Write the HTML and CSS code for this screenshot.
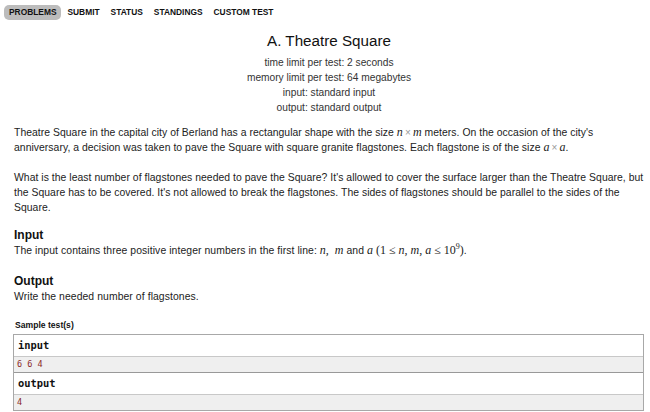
FILE: index.html
```html
<!DOCTYPE html>
<html>
<head>
<meta charset="utf-8">
<link rel="stylesheet" href="styles.css">
</head>
<body>
<nav class="menu">
  <a class="item active">PROBLEMS</a>
  <a class="item">SUBMIT</a>
  <a class="item">STATUS</a>
  <a class="item">STANDINGS</a>
  <a class="item">CUSTOM TEST</a>
</nav>
<main class="content">
  <header class="head">
    <h1 class="title">A. Theatre Square</h1>
    <div class="limits">
      <div>time limit per test: 2 seconds</div>
      <div>memory limit per test: 64 megabytes</div>
      <div>input: standard input</div>
      <div>output: standard output</div>
    </div>
  </header>
  <p class="para first">Theatre Square in the capital city of Berland has a rectangular shape with the size <span class="m">n</span>&thinsp;<span class="times">×</span>&thinsp;<span class="m">m</span> meters. On the occasion of the city's anniversary, a decision was taken to pave the Square with square granite flagstones. Each flagstone is of the size <span class="m">a</span>&thinsp;<span class="times">×</span>&thinsp;<span class="m">a</span>.</p>
  <p class="para">What is the least number of flagstones needed to pave the Square? It's allowed to cover the surface larger than the Theatre Square, but the Square has to be covered. It's not allowed to break the flagstones. The sides of flagstones should be parallel to the sides of the Square.</p>
  <section class="sec">
    <div class="sec-title">Input</div>
    <p class="sec-text">The input contains three positive integer numbers in the first line: <span class="m">n</span><span class="mr">,</span>&nbsp; <span class="m">m</span> and <span class="m">a</span> <span class="mr">(1 ≤ </span><span class="m">n</span><span class="mr">, </span><span class="m">m</span><span class="mr">, </span><span class="m">a</span><span class="mr"> ≤ 10<sup class="sup">9</sup>)</span>.</p>
  </section>
  <section class="sec">
    <div class="sec-title">Output</div>
    <p class="sec-text">Write the needed number of flagstones.</p>
  </section>
  <div class="sample-title">Sample test(s)</div>
  <div class="sample">
    <div class="box-title">input</div>
    <pre class="box-data">6 6 4</pre>
    <div class="box-title">output</div>
    <pre class="box-data last">4</pre>
  </div>
</main>
</body>
</html>
```
FILE: styles.css
```css
html, body {
  margin: 0;
  padding: 0;
  background: #fff;
}
body {
  font-family: "Liberation Sans", Arial, sans-serif;
  color: #222;
  font-size: 10.2px;
}
.menu {
  display: flex;
  padding: 5px 0 0 4px;
}
.item {
  font-weight: bold;
  font-size: 8.4px;
  line-height: 15px;
  height: 15px;
  padding: 0 5px;
  margin-right: 1px;
  border-radius: 5px;
  color: #111;
}
.active {
  background: #bcbcbc;
}
.content {
  padding: 0 6px 0 14px;
}
.head {
  text-align: center;
}
.title {
  margin: 12px 0 0;
  font-weight: normal;
  font-size: 15.2px;
  line-height: 18px;
  color: #111;
}
.limits {
  margin-top: 5px;
  line-height: 15px;
  color: #333;
}
.para {
  margin: 15px 0 0;
  line-height: 15px;
  font-size: 10.4px;
  letter-spacing: 0.04px;
}
.para.first {
  margin-top: 10px;
}
.m {
  font-family: "Liberation Serif", "Times New Roman", serif;
  font-style: italic;
  font-size: 12px;
  line-height: 1;
  letter-spacing: 0;
}
.mr {
  font-family: "Liberation Serif", "Times New Roman", serif;
  font-size: 12px;
  line-height: 1;
  letter-spacing: 0;
}
.times {
  color: #999;
  font-size: 10px;
  line-height: 1;
}
.sup {
  font-size: 8px;
  line-height: 0;
}
.sec {
  margin-top: 13px;
}
.sec + .sec {
  margin-top: 16px;
}
.sec-title {
  font-weight: bold;
  font-size: 12px;
  line-height: 15px;
  color: #111;
}
.sec-text {
  margin: 0;
  line-height: 15px;
  font-size: 10.4px;
  letter-spacing: 0.08px;
}
.sample-title {
  margin-top: 14px;
  font-weight: bold;
  font-size: 8.6px;
  line-height: 15px;
  color: #111;
  margin-left: 1px;
}
.sample {
  margin-top: 1px;
  border: 1px solid #a8a8a8;
  margin-left: -1px;
}
.box-title {
  font-family: "DejaVu Sans Mono", "Liberation Mono", monospace;
  font-weight: bold;
  font-size: 10.4px;
  line-height: 21px;
  height: 21px;
  padding-left: 4px;
  border-bottom: 1px solid #c8c8c8;
  color: #111;
}
.box-data {
  margin: 0;
  font-family: "DejaVu Sans Mono", "Liberation Mono", monospace;
  font-size: 8.5px;
  line-height: 15px;
  height: 15px;
  padding-left: 3px;
  background: #efefef;
  color: #8b2a2a;
  border-bottom: 1px solid #999;
}
.box-data.last {
  border-bottom: none;
}
```
